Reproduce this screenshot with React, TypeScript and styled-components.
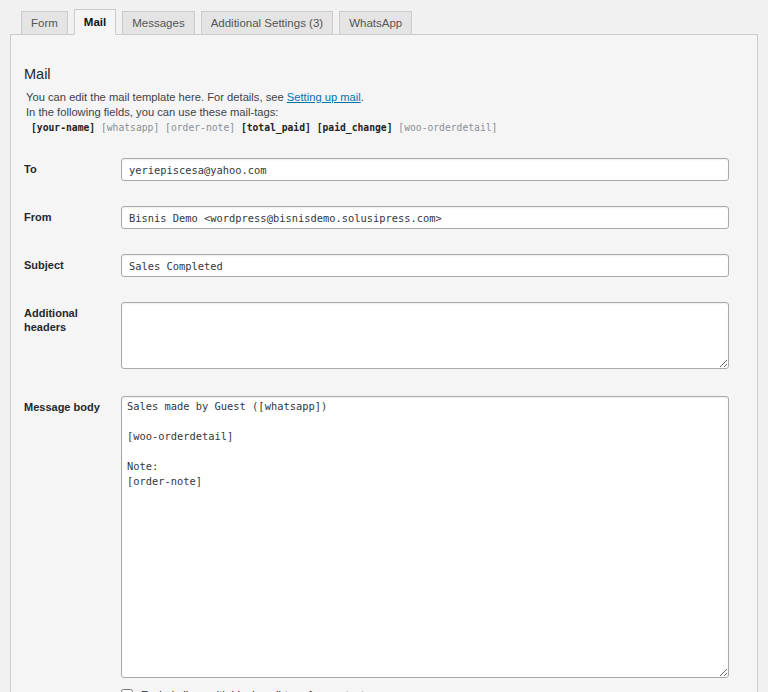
import React from 'react';
import styled, { createGlobalStyle } from 'styled-components';

const GlobalStyle = createGlobalStyle`
    html, body {
        margin: 0;
        padding: 0;
        background: #f1f1f1;
        font-family: "Liberation Sans", Arial, sans-serif;
        color: #23282d;
    }
`;

const Page = styled.div`
    padding: 8px 10px 0 10px;
    width: 748px;
`;

const TabBar = styled.ul`
    display: flex;
    align-items: flex-end;
    gap: 6px;
    margin: 0;
    padding: 0 0 0 11px;
    list-style: none;
    height: 26px;
`;

const Tab = styled.li<{ $active?: boolean }>`
    box-sizing: border-box;
    height: ${p => (p.$active ? '26px' : '24px')};
    padding: 0 9px;
    display: flex;
    align-items: center;
    border: 1px solid #cccccc;
    border-bottom: ${p => (p.$active ? '1px solid #f5f5f5' : '1px solid #cccccc')};
    background: ${p => (p.$active ? '#f5f5f5' : '#e4e4e4')};
    font-size: 11.5px;
    font-weight: ${p => (p.$active ? 700 : 400)};
    color: ${p => (p.$active ? '#111' : '#555')};
    margin-bottom: -1px;
    position: relative;
    z-index: ${p => (p.$active ? 2 : 1)};
`;

const Panel = styled.section`
    box-sizing: border-box;
    border: 1px solid #cccccc;
    background: #f5f5f5;
    padding: 30px 27px 0 13px;
    min-height: 700px;
`;

const Heading = styled.h2`
    margin: 0 0 7px 0;
    font-size: 14.5px;
    font-weight: 400;
    color: #23282d;
    line-height: 18px;
`;

const Note = styled.p`
    margin: 0 0 0 2px;
    font-size: 11.2px;
    line-height: 15px;
    color: #3c434a;
`;

const Link = styled.a`
    color: #0073aa;
    text-decoration: underline;
`;

const Tags = styled.div`
    margin: 0 0 0 7px;
    font-family: "DejaVu Sans Mono", "Liberation Mono", monospace;
    font-size: 9.7px;
    line-height: 15px;
    display: flex;
    gap: 5.8px;
`;

const Tag = styled.span<{ $used?: boolean }>`
    font-weight: ${p => (p.$used ? 700 : 400)};
    color: ${p => (p.$used ? '#1d2327' : '#8c8f94')};
`;

const Fields = styled.div`
    margin-top: 23px;
    display: grid;
    grid-template-columns: 97px 608px;
    row-gap: 25px;
`;

const Label = styled.label<{ $gap?: number }>`
    font-size: 11px;
    font-weight: 700;
    color: #23282d;
    line-height: 14px;
    padding-top: 4px;
    margin-top: ${p => p.$gap ?? 0}px;
`;

const fieldBase = `
    box-sizing: border-box;
    width: 100%;
    border: 1px solid #a7aaad;
    border-radius: 3px;
    background: #fff;
    font-family: "DejaVu Sans Mono", "Liberation Mono", monospace;
    font-size: 10.4px;
    color: #32373c;
    padding: 4px 7px;
    box-shadow: inset 0 1px 2px rgba(0,0,0,0.07);
    outline: none;
    margin: 0;
`;

const TextInput = styled.input`
    ${fieldBase}
    height: 23px;
`;

const TextArea = styled.textarea<{ $h: number; $gap?: number }>`
    ${fieldBase}
    display: block;
    height: ${p => p.$h}px;
    line-height: 15px;
    padding: 2px 5px;
    resize: vertical;
    margin-top: ${p => p.$gap ?? 0}px;
`;

const CheckRow = styled.label`
    grid-column: 2;
    margin-top: -17px;
    display: flex;
    align-items: center;
    gap: 8px;
    font-size: 11px;
    color: #23282d;
`;

const Check = styled.input`
    width: 12px;
    height: 12px;
    margin: 0;
`;

const tabs = ['Form', 'Mail', 'Messages', 'Additional Settings (3)', 'WhatsApp'];

const bodyText = `Sales made by Guest ([whatsapp])

[woo-orderdetail]

Note:
[order-note]`;

function App() {
    return (
        <>
            <GlobalStyle />
            <Page>
                <TabBar>
                    {tabs.map(t => (
                        <Tab key={t} $active={t === 'Mail'}>{t}</Tab>
                    ))}
                </TabBar>
                <Panel>
                    <Heading>Mail</Heading>
                    <Note>You can edit the mail template here. For details, see <Link href="#">Setting up mail</Link>.</Note>
                    <Note>In the following fields, you can use these mail-tags:</Note>
                    <Tags>
                        <Tag $used>[your-name]</Tag>
                        <Tag>[whatsapp]</Tag>
                        <Tag>[order-note]</Tag>
                        <Tag $used>[total_paid]</Tag>
                        <Tag $used>[paid_change]</Tag>
                        <Tag>[woo-orderdetail]</Tag>
                    </Tags>
                    <Fields>
                        <Label>To</Label>
                        <TextInput defaultValue="yeriepiscesa@yahoo.com" />
                        <Label>From</Label>
                        <TextInput defaultValue="Bisnis Demo <wordpress@bisnisdemo.solusipress.com>" />
                        <Label>Subject</Label>
                        <TextInput defaultValue="Sales Completed" />
                        <Label>Additional<br />headers</Label>
                        <TextArea $h={67} defaultValue="" />
                        <Label $gap={2}>Message body</Label>
                        <TextArea $h={282} $gap={2} defaultValue={bodyText} />
                        <CheckRow>
                            <Check type="checkbox" />
                            Exclude lines with blank mail-tags from output
                        </CheckRow>
                    </Fields>
                </Panel>
            </Page>
        </>
    );
}

export default App;
